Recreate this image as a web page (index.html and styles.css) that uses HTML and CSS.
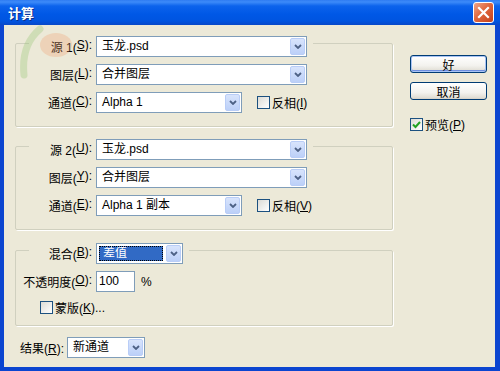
FILE: index.html
```html
<!DOCTYPE html>
<html lang="zh-CN">
<head>
    <meta charset="UTF-8">
    <title>计算</title>
    <link rel="stylesheet" href="styles.css">
</head>
<body>
<div class="window">
    <div class="titlebar">
        <span class="title">计算</span>
        <span class="close">
            <svg width="13" height="13" viewBox="0 0 13 13"><path d="M2 2 L11 11 M11 2 L2 11" stroke="#fff" stroke-width="2.2" stroke-linecap="square"/></svg>
        </span>
    </div>
    <div class="client">
        <div class="main">
            <!-- source 1 -->
            <div class="group">
                <div class="row legend">
                    <span class="lbl">源 1(<u>S</u>):</span>
                    <div class="select wide"><span class="val">玉龙.psd</span><span class="drop"><svg width="8" height="5" viewBox="0 0 8 5"><path d="M1 1 L4 4 L7 1" fill="none" stroke="#4D6185" stroke-width="1.8"/></svg></span></div>
                </div>
                <div class="row">
                    <span class="lbl">图层(<u>L</u>):</span>
                    <div class="select wide"><span class="val">合并图层</span><span class="drop"><svg width="8" height="5" viewBox="0 0 8 5"><path d="M1 1 L4 4 L7 1" fill="none" stroke="#4D6185" stroke-width="1.8"/></svg></span></div>
                </div>
                <div class="row">
                    <span class="lbl">通道(<u>C</u>):</span>
                    <div class="select mid"><span class="val">Alpha 1</span><span class="drop"><svg width="8" height="5" viewBox="0 0 8 5"><path d="M1 1 L4 4 L7 1" fill="none" stroke="#4D6185" stroke-width="1.8"/></svg></span></div>
                    <span class="check invert"><span class="box"></span>反相(<u>I</u>)</span>
                </div>
            </div>

            <!-- source 2 -->
            <div class="group g2">
                <div class="row legend">
                    <span class="lbl">源 2(<u>U</u>):</span>
                    <div class="select wide"><span class="val">玉龙.psd</span><span class="drop"><svg width="8" height="5" viewBox="0 0 8 5"><path d="M1 1 L4 4 L7 1" fill="none" stroke="#4D6185" stroke-width="1.8"/></svg></span></div>
                </div>
                <div class="row">
                    <span class="lbl">图层(<u>Y</u>):</span>
                    <div class="select wide"><span class="val">合并图层</span><span class="drop"><svg width="8" height="5" viewBox="0 0 8 5"><path d="M1 1 L4 4 L7 1" fill="none" stroke="#4D6185" stroke-width="1.8"/></svg></span></div>
                </div>
                <div class="row">
                    <span class="lbl">通道(<u>E</u>):</span>
                    <div class="select mid"><span class="val">Alpha 1 副本</span><span class="drop"><svg width="8" height="5" viewBox="0 0 8 5"><path d="M1 1 L4 4 L7 1" fill="none" stroke="#4D6185" stroke-width="1.8"/></svg></span></div>
                    <span class="check invert"><span class="box"></span>反相(<u>V</u>)</span>
                </div>
            </div>

            <!-- blending -->
            <div class="group g3">
                <div class="row legend">
                    <span class="lbl">混合(<u>B</u>):</span>
                    <div class="select blend"><span class="val"><span class="hilite">差值</span></span><span class="drop"><svg width="8" height="5" viewBox="0 0 8 5"><path d="M1 1 L4 4 L7 1" fill="none" stroke="#4D6185" stroke-width="1.8"/></svg></span></div>
                </div>
                <div class="row">
                    <span class="lbl">不透明度(<u>O</u>):</span>
                    <div class="input">100</div>
                    <span class="pct">%</span>
                </div>
                <div class="row small">
                    <span class="check mask"><span class="box"></span>蒙版(<u>K</u>)...</span>
                </div>
            </div>

            <div class="row result">
                <span>结果(<u>R</u>):</span>
                <div class="select res"><span class="val">新通道</span><span class="drop"><svg width="8" height="5" viewBox="0 0 8 5"><path d="M1 1 L4 4 L7 1" fill="none" stroke="#4D6185" stroke-width="1.8"/></svg></span></div>
            </div>
        </div>

        <div class="side">
            <button class="btn default">好</button>
            <button class="btn">取消</button>
            <span class="check preview"><span class="box"><svg width="11" height="11" viewBox="0 0 11 11"><path d="M2 5.5 L4.5 8 L9 3" fill="none" stroke="#21A121" stroke-width="2"/></svg></span>预览(<u>P</u>)</span>
        </div>
    </div>

    <!-- faint logo stamped over the source picture -->
    <svg class="mark-logo" width="60" height="55" viewBox="0 0 60 55"><path d="M22 4 C10 14 4 30 6 50" fill="none" stroke="#8fc26a" stroke-width="7" stroke-linecap="round"/><ellipse cx="38" cy="20" rx="16" ry="12" fill="#f0a070"/></svg>
</div>
</body>
</html>
```

FILE: styles.css
```css
/* dialog XP */
html, body {
    margin: 0;
    padding: 0;
}

body {
    width: 500px;
    height: 371px;
    overflow: hidden;
    font-family: "Liberation Sans", "Noto Sans CJK SC", sans-serif;
    font-size: 12px;
    color: #000;
}

u {
    text-decoration: underline;
    text-underline-offset: 1px;
}

.window {
    position: relative;
    width: 500px;
    height: 371px;
    display: flex;
    flex-direction: column;
    background: #ECE9D8;
}

.titlebar {
    height: 25px;
    flex: none;
    display: flex;
    align-items: center;
    justify-content: space-between;
    padding: 0 6px 0 8px;
    background: linear-gradient(#2F7CF2 0, #3D8BF9 2px, #0C63EC 6px, #0058E6 14px, #0054E0 21px, #0848C8 25px);
}

.title {
    color: #fff;
    font-weight: bold;
    font-size: 13px;
    text-shadow: 1px 1px 0 #0A2F8C;
}

.close {
    width: 19px;
    height: 19px;
    display: flex;
    align-items: center;
    justify-content: center;
    border: 1px solid #fff;
    border-radius: 3px;
    background: linear-gradient(135deg, #F0A58A 0%, #E0683F 45%, #C4401A 100%);
}

.client {
    flex: 1;
    display: flex;
    border-style: solid;
    border-color: #0B45D0;
    border-width: 0 5px 4px 4px;
    padding-top: 18px;
}

.main {
    margin-left: 11px;
    width: 378px;
}

.group {
    border: 1px solid #D0D0BF;
    border-radius: 2px;
    box-shadow: 1px 1px 0 #fff;
    padding: 0 0 13px 13px;
    display: flex;
    flex-direction: column;
    gap: 7px;
}

.g2 {
    margin-top: 19px;
}

.g3 {
    margin-top: 20px;
    padding-bottom: 9px;
}

.row {
    display: flex;
    align-items: center;
    height: 21px;
}

.row.small {
    height: 17px;
}

.legend {
    margin-top: -8px;
    align-self: flex-start;
    background: #ECE9D8;
    padding-right: 6px;
}

.lbl {
    width: 63px;
    margin-right: 4px;
    display: flex;
    justify-content: flex-end;
    white-space: nowrap;
}

.select {
    height: 21px;
    box-sizing: border-box;
    display: flex;
    border: 1px solid #7F9DB9;
    background: #fff;
}

.select .val {
    flex: 1;
    padding-left: 5px;
    line-height: 19px;
    white-space: nowrap;
}

.drop {
    width: 15px;
    margin: 1px;
    box-sizing: border-box;
    border: 1px solid #B9CDF7;
    border-radius: 2px;
    background: linear-gradient(#D8E4FC, #BCD0F8);
    display: flex;
    align-items: center;
    justify-content: center;
}

.wide { width: 211px; }
.mid { width: 146px; }
.blend { width: 87px; }
.res { width: 78px; }

.blend .val {
    padding: 2px;
    line-height: 15px;
}

.hilite {
    display: block;
    background: #316AC5;
    color: #fff;
    padding-left: 4px;
    outline: 1px dotted #000;
    outline-offset: -1px;
}

.input {
    width: 39px;
    height: 21px;
    box-sizing: border-box;
    border: 1px solid #7F9DB9;
    background: #fff;
    line-height: 19px;
    padding-left: 2px;
}

.pct {
    margin-left: 6px;
}

.check {
    display: flex;
    align-items: center;
    white-space: nowrap;
}

.check .box {
    width: 13px;
    height: 13px;
    box-sizing: border-box;
    border: 1px solid #1C5180;
    background: linear-gradient(135deg, #DCDBD5, #fff);
    margin-right: 2px;
    display: flex;
    align-items: center;
    justify-content: center;
}

.invert {
    margin-left: 15px;
}

.mask {
    margin-left: 11px;
}

.result {
    margin-top: 11px;
    margin-left: 5px;
    gap: 3px;
}

.side {
    margin-left: 17px;
    padding-top: 12px;
    width: 77px;
    display: flex;
    flex-direction: column;
}

.btn {
    width: 77px;
    height: 18px;
    padding: 0;
    font: inherit;
    color: #000;
    border: 1px solid #003C74;
    border-radius: 3px;
    background: linear-gradient(#FFFFFF, #F3F2EE 60%, #E2DFD6 90%, #D6D0C5);
    margin-bottom: 9px;
}

.btn.default {
    box-shadow: inset 0 0 0 1px #A9C4F4, inset 0 -1px 0 1px #6F8FE0;
}

.preview {
    margin-top: 7px;
}

/* overlay */
.mark-logo {
    position: absolute;
    left: 18px;
    top: 25px;
    opacity: 0.3;
    pointer-events: none;
}
```
